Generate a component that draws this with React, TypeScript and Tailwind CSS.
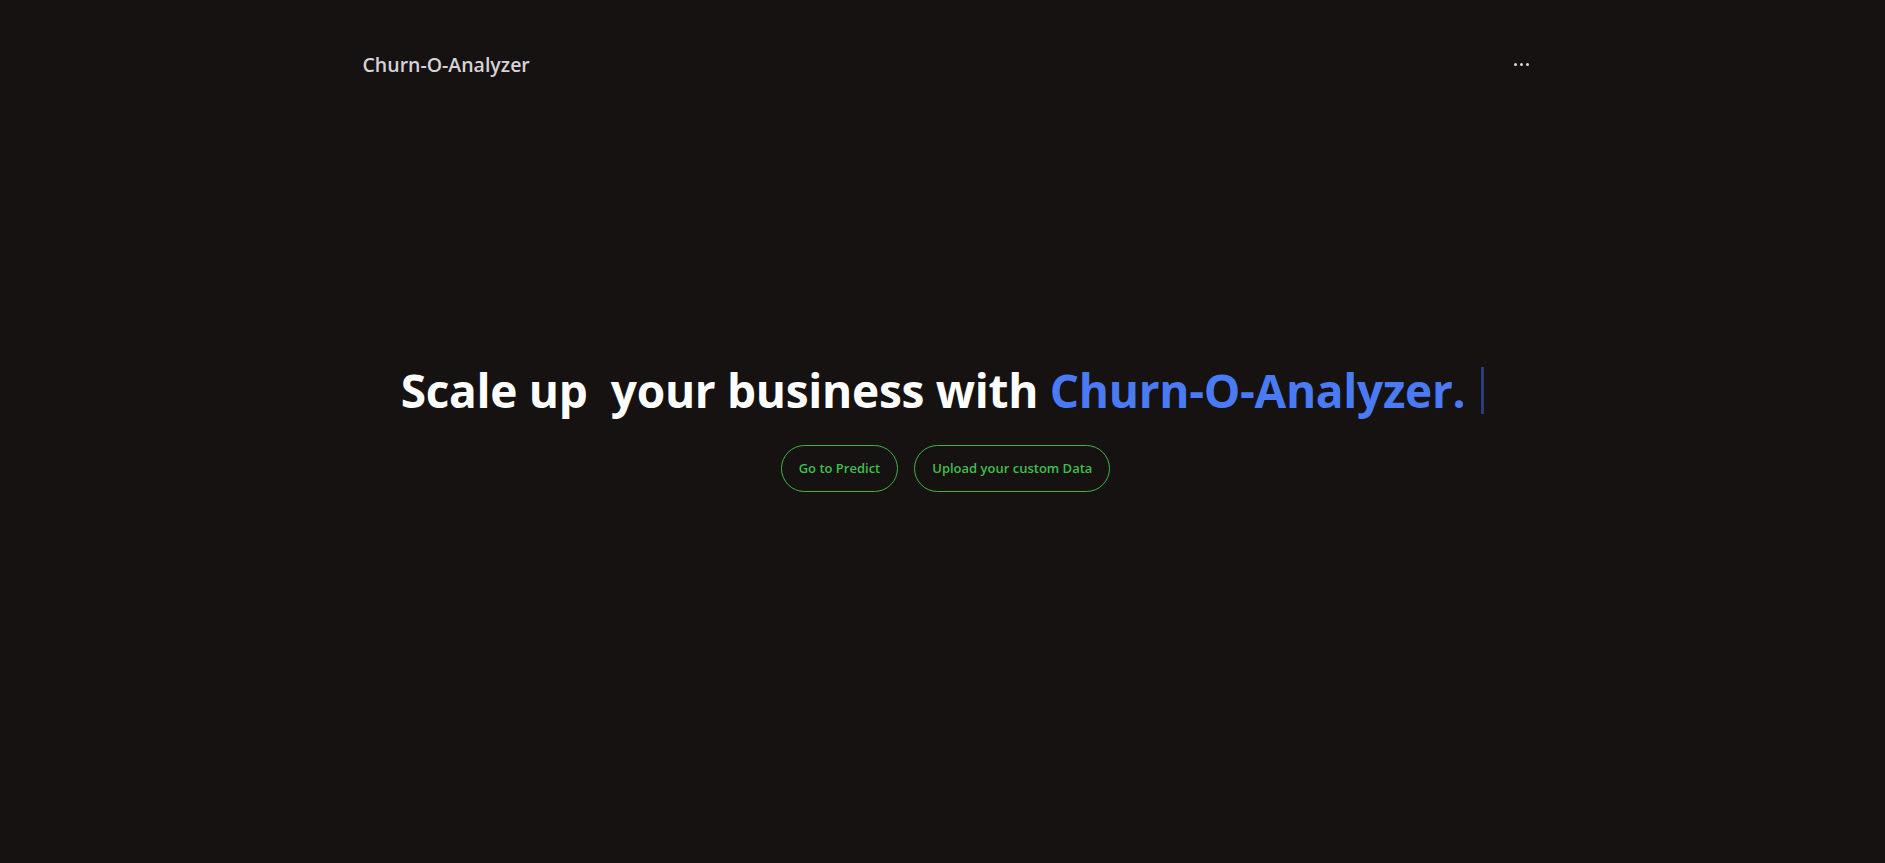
export default function App() {
	return (
		<div
			className="min-h-screen w-full bg-[#161211] text-white"
			style={{ fontFamily: '"Open Sans", "Noto Sans", sans-serif' }}
		>
			<nav className="mx-auto flex w-[1172px] items-center justify-between pl-[6px] pt-[50px]">
				<div className="text-[19.5px] font-semibold text-[#d6d3d8]">Churn-O-Analyzer</div>
				<button className="flex items-center gap-[3px]">
					<span className="h-[3px] w-[3px] rounded-full bg-[#d8d8d8]"></span>
					<span className="h-[3px] w-[3px] rounded-full bg-[#d8d8d8]"></span>
					<span className="h-[3px] w-[3px] rounded-full bg-[#d8d8d8]"></span>
				</button>
			</nav>

			<main className="flex flex-col items-center pt-[283px]">
				<h1 className="flex items-center text-[46px] font-bold leading-[56px] tracking-[-0.3px]">
					<span>Scale up&nbsp; your business with&nbsp;</span>
					<span className="text-[#4a7bf5]">Churn-O-Analyzer.</span>
					<span className="ml-[16px] h-[47px] w-[3px] bg-[#2c3b7c]"></span>
				</h1>
				<div className="ml-[6px] mt-[27px] flex gap-[16px]">
					<button className="h-[47px] rounded-full border border-[#3bb54a] px-[17px] text-[13px] font-semibold text-[#3fbf4e]">
						Go to Predict
					</button>
					<button className="h-[47px] rounded-full border border-[#3bb54a] px-[17px] text-[13px] font-semibold text-[#3fbf4e]">
						Upload your custom Data
					</button>
				</div>
			</main>
		</div>
	);
}
